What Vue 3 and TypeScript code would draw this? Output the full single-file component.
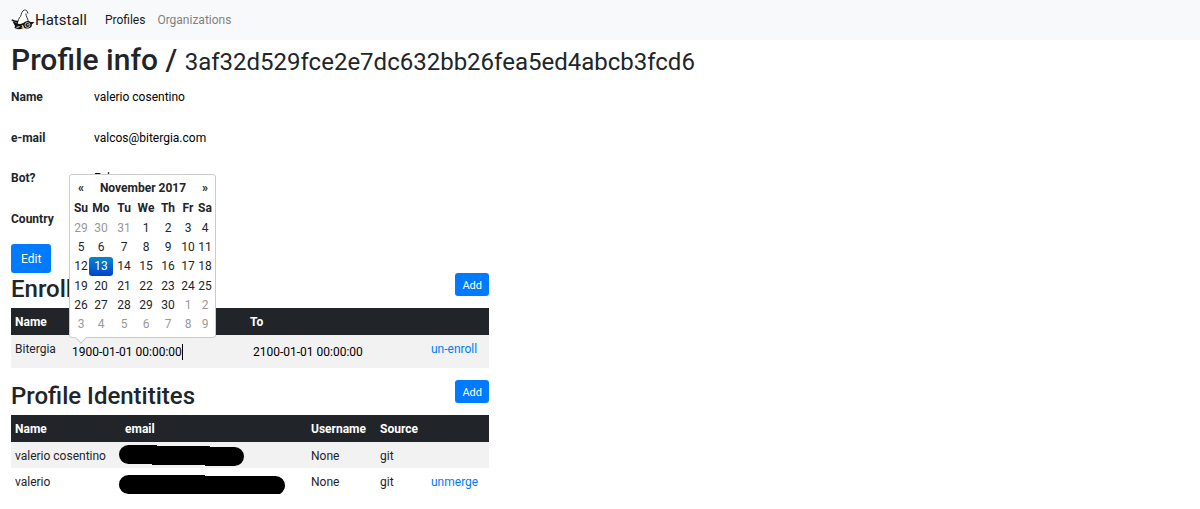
<script setup lang="ts">
import { computed, ref } from 'vue'

interface Day {
  value: number
  muted: boolean
  active: boolean
}

const name = ref('valerio cosentino')
const email = ref('valcos@bitergia.com')
const bot = ref('False')
const country = ref('')
const from = ref('1900-01-01 00:00:00')
const to = ref('2100-01-01 00:00:00')

const weekdays = ['Su', 'Mo', 'Tu', 'We', 'Th', 'Fr', 'Sa']

const weeks = computed<Day[][]>(() =>
  Array.from({ length: 6 }, (_, w) =>
    Array.from({ length: 7 }, (_, d) => {
      const date = new Date(2017, 9, 29 + w * 7 + d)
      const muted = date.getMonth() !== 10
      return { value: date.getDate(), muted, active: !muted && date.getDate() === 13 }
    }),
  ),
)
</script>

<template>
  <div class="page">
    <nav class="navbar">
      <a class="brand" href="#">
        <svg class="logo" viewBox="0 0 24 22" aria-hidden="true">
          <path d="M6 15C7.500 12 7.500 9 9.500 7.500C10.500 5 11 1.500 13.500 1C15.500 .7 16.300 2 16.800 4.500C16 3.500 15.300 3.500 14.800 4.500C15.200 8 17 9.500 17.500 12.500L11 16.500Z" fill="#fff" />
          <path d="M6 14.500C7.500 12 7.500 9 9.500 7.500C10.500 5 11 1.500 13.500 1C15.500 .7 16.300 2 16.800 4.500M14.800 4.500C15.200 8 16.500 9 17.200 12" fill="none" stroke="#333" />
          <path d="M.8 10.800C2.500 12.500 4.500 12.500 6.300 12.500L5.800 15C8 16.200 10 16 12.500 14.800" fill="none" stroke="#111" stroke-width="1.500" />
          <path d="M1.500 12.500L5 13.500L6.500 15.500L11.500 16.500L10.800 20L7 20.300L3.500 19L4 17Z" fill="#111" />
          <path d="M5.500 18.500L8.500 17.500" stroke="#ddd" stroke-width="1.200" />
          <path d="M11.500 15C13.500 12 18 11 19.500 13L23.500 13L20.800 15.500C21.500 18.800 17 20.500 13.300 19Z" fill="#111" />
          <circle cx="16.500" cy="16" r="2.500" fill="#222" stroke="#ddd" stroke-width=".8" />
          <circle cx="17" cy="15.800" r=".8" fill="#ddd" />
          <path d="M10.500 18h2.300l-.6 2.300h-1.200z" fill="#f5a21b" />
        </svg>
        <span>Hatstall</span>
      </a>
      <a class="nav-link current" href="#">Profiles</a>
      <a class="nav-link" href="#">Organizations</a>
    </nav>

    <main>
      <h1>Profile info / <small>3af32d529fce2e7dc632bb26fea5ed4abcb3fcd6</small></h1>

      <div class="column">
        <form class="profile" @submit.prevent>
          <div class="fields">
            <label for="name">Name</label><input id="name" v-model="name" type="text" />
            <label for="email">e-mail</label><input id="email" v-model="email" type="text" />
            <label for="bot">Bot?</label><input id="bot" v-model="bot" type="text" />
            <label for="country">Country</label><input id="country" v-model="country" type="text" />
          </div>
          <button class="btn edit" type="submit">Edit</button>
        </form>

        <section class="enrollments">
          <div class="section-head">
            <h2>Enrollments</h2>
            <button class="btn small" type="button">Add</button>
          </div>
          <table class="data">
            <colgroup><col class="c-org" /><col /><col /><col class="c-action" /></colgroup>
            <thead>
              <tr><th>Name</th><th>From</th><th>To</th><th></th></tr>
            </thead>
            <tbody>
              <tr>
                <td>Bitergia</td>
                <td class="date">
                  <input v-model="from" type="text" aria-label="From" />
                  <span class="caret"></span>
                  <div class="picker">
                    <table>
                      <colgroup>
                        <col class="d-su" /><col class="d-mo" /><col class="d-mid" /><col class="d-mid" />
                        <col class="d-mid" /><col class="d-fr" /><col class="d-sa" />
                      </colgroup>
                      <thead>
                        <tr>
                          <th><button type="button" aria-label="Previous month">«</button></th>
                          <th colspan="5">November 2017</th>
                          <th><button type="button" aria-label="Next month">»</button></th>
                        </tr>
                        <tr><th v-for="d in weekdays" :key="d">{{ d }}</th></tr>
                      </thead>
                      <tbody>
                        <tr v-for="(week, i) in weeks" :key="i">
                          <td v-for="(day, j) in week" :key="j" :class="{ muted: day.muted, active: day.active }">{{ day.value }}</td>
                        </tr>
                      </tbody>
                    </table>
                  </div>
                </td>
                <td class="date"><input v-model="to" type="text" aria-label="To" /></td>
                <td><a href="#">un-enroll</a></td>
              </tr>
            </tbody>
          </table>
        </section>

        <section class="identities">
          <div class="section-head">
            <h2>Profile Identitites</h2>
            <button class="btn small" type="button">Add</button>
          </div>
          <table class="data">
            <colgroup><col class="c-name" /><col /><col class="c-user" /><col class="c-source" /><col class="c-action" /></colgroup>
            <thead>
              <tr><th>Name</th><th>email</th><th>Username</th><th>Source</th><th></th></tr>
            </thead>
            <tbody>
              <tr>
                <td>valerio cosentino</td>
                <td class="hidden-mail">
                  <svg width="125" height="22" viewBox="0 0 125 22" aria-hidden="true">
                    <path d="M10 9.500H38M33 10.500H91M86 11.500H115" />
                    <path class="round" d="M9.500 9.500H28M95 11.500H115.500" />
                  </svg>
                </td>
                <td>None</td><td>git</td><td></td>
              </tr>
              <tr>
                <td>valerio</td>
                <td class="hidden-mail second">
                  <svg width="167" height="22" viewBox="0 0 167 22" aria-hidden="true">
                    <path d="M10 9.500H86M81 10.500H156" />
                    <path class="round" d="M9.500 9.500H60M100 10.500H156.500" />
                  </svg>
                </td>
                <td>None</td><td>git</td><td><a href="#">unmerge</a></td>
              </tr>
            </tbody>
          </table>
        </section>
      </div>
    </main>
  </div>
</template>

<style>
body {
  margin: 0;
  background: #fff;
}
</style>

<style scoped>
.page {
  font: 12px/18px Roboto, "Liberation Sans", sans-serif;
  color: #212529;
}
.page * {
  box-sizing: border-box;
}
a {
  color: #007bff;
  text-decoration: none;
}
input,
button {
  font: inherit;
  border: 0;
  padding: 0;
}
input {
  background: transparent;
  color: #000;
  min-width: 0;
  width: 100%;
  outline: 0;
}
.navbar {
  display: flex;
  align-items: center;
  gap: 12px;
  height: 40px;
  padding: 0 11px;
  background: #f8f9fa;
}
.brand {
  display: flex;
  align-items: center;
  margin-right: 6px;
  font-size: 15px;
  color: #1a1a1a;
}
.logo {
  width: 24px;
  height: 22px;
}
.nav-link {
  color: #808182;
}
.nav-link.current {
  color: #1a1a1a;
}
h1,
h2 {
  margin: 0;
  font-weight: 500;
}
h1 {
  padding: 2px 11px 0;
  font-size: 30px;
  line-height: 35px;
}
h1 small {
  font-size: 24px;
  font-weight: 400;
  line-height: 24px;
}
.column {
  width: 41.6667%;
  padding: 0 11px;
}
.fields {
  display: grid;
  grid-template-columns: 83px 1fr;
  grid-auto-rows: 1fr;
  align-items: center;
  height: 162px;
}
.fields label {
  font-weight: 700;
}
.btn {
  padding: 6px 10px 5px;
  border-radius: 3px;
  background: #007bff;
  color: #fff;
}
.btn.edit {
  display: block;
  margin-top: 5px;
}
.btn.small {
  padding: 5px 7px 3px;
  font-size: 11px;
  line-height: 15px;
}
.section-head {
  display: flex;
  justify-content: space-between;
  align-items: flex-start;
  height: 35px;
}
h2 {
  font-size: 24px;
  line-height: 32px;
}
.identities {
  margin-top: 12px;
}
table {
  border-collapse: collapse;
  table-layout: fixed;
  width: 100%;
}
.data th,
.data td {
  padding: 5px 4px 4px;
  text-align: left;
  vertical-align: top;
}
.data td {
  padding-bottom: 3px;
}
.data > thead th {
  background: #212529;
  color: #fff;
}
.data > tbody > tr:nth-child(odd) {
  background: #f2f2f2;
}
.c-org {
  width: 54px;
}
.c-name {
  width: 110px;
}
.c-user {
  width: 69px;
}
.c-source {
  width: 51px;
}
.c-action {
  width: 62px;
}
.data td.date {
  position: relative;
  padding: 8px 7px 7px;
}
.date > input {
  display: block;
  height: 18px;
}
.caret {
  position: absolute;
  left: 117px;
  top: 9px;
  width: 1px;
  height: 16px;
  background: #000;
}
.picker {
  position: absolute;
  left: 4px;
  bottom: 30px;
  width: 147px;
  padding: 3px;
  border: 1px solid #ccc;
  border-radius: 3px;
  background: #fff;
}
.picker::after {
  content: "";
  position: absolute;
  left: 7px;
  bottom: -5px;
  width: 7px;
  height: 7px;
  border: solid #ccc;
  border-width: 0 1px 1px 0;
  background: #fff;
  transform: rotate(45deg);
}
.picker table {
  height: 156px;
  border-collapse: separate;
  border-spacing: 0;
}
.picker th,
.picker td {
  padding: 0;
  color: #212529;
  text-align: center;
  vertical-align: middle;
  white-space: nowrap;
}
.picker th {
  height: 20px;
}
.picker button {
  background: none;
  color: inherit;
}
.picker td.muted {
  color: #999;
}
.picker td.active {
  border-radius: 3px;
  background: linear-gradient(#08c, #04c);
  color: #fff;
}
.d-su {
  width: 16px;
}
.d-mo {
  width: 24px;
}
.d-mid {
  width: 22px;
}
.d-fr {
  width: 18px;
}
.d-sa {
  width: 16px;
}
.hidden-mail {
  position: relative;
}
.hidden-mail svg {
  position: absolute;
  left: -2px;
  top: 3px;
  fill: none;
  stroke: #000;
  stroke-width: 19px;
}
.hidden-mail.second svg {
  top: 7px;
}
.round {
  stroke-linecap: round;
}
</style>
